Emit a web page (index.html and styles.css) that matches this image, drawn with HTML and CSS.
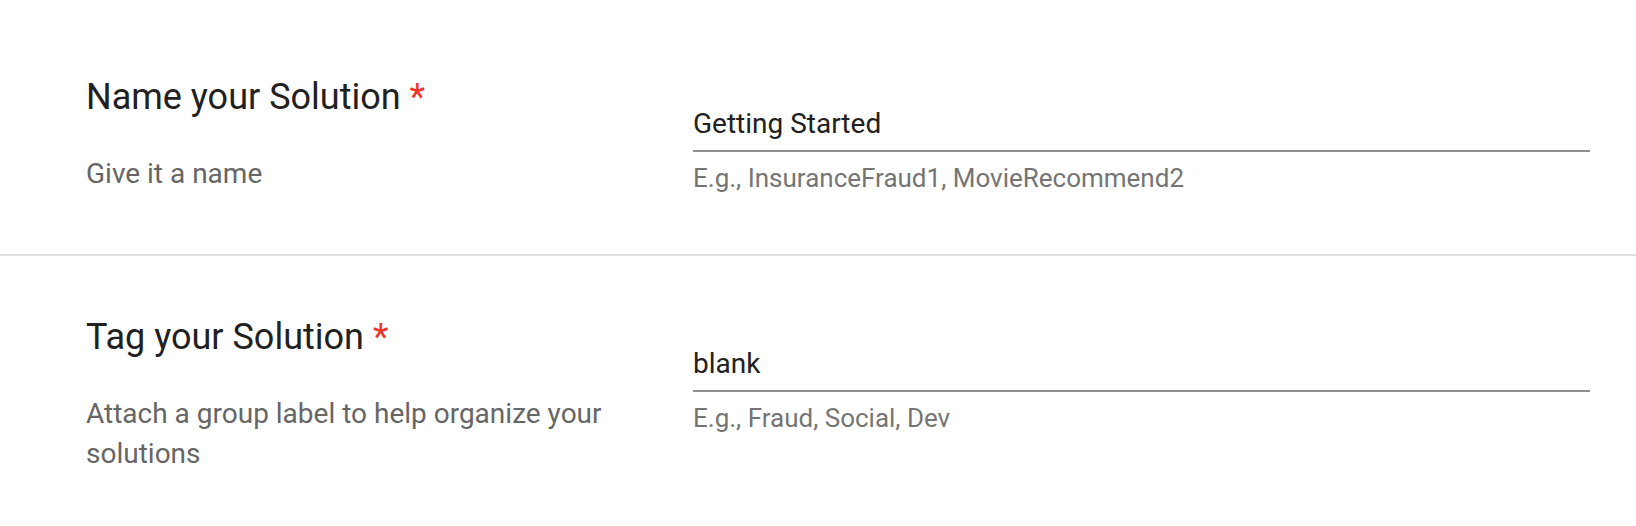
FILE: index.html
```html
<!DOCTYPE html>
<html lang="en">
<head>
<meta charset="utf-8">
<title>Solution settings</title>
<link rel="stylesheet" href="styles.css">
</head>
<body>
<main class="page">
  <section class="row">
    <div class="info">
      <h2 class="title">Name your Solution <span class="req">*</span></h2>
      <p class="desc">Give it a name</p>
    </div>
    <div class="field">
      <input class="input" type="text" value="Getting Started">
      <div class="helper">E.g., InsuranceFraud1, MovieRecommend2</div>
    </div>
  </section>
  <section class="row">
    <div class="info">
      <h2 class="title">Tag your Solution <span class="req">*</span></h2>
      <p class="desc">Attach a group label to help organize your solutions</p>
    </div>
    <div class="field">
      <input class="input" type="text" value="blank">
      <div class="helper">E.g., Fraud, Social, Dev</div>
    </div>
  </section>
</main>
</body>
</html>
```
FILE: styles.css
```css
html, body {
  margin: 0;
  padding: 0;
  background: #ffffff;
}
body {
  font-family: Roboto, "Liberation Sans", Arial, sans-serif;
  color: #212121;
}
.page {
  padding-top: 16px;
}
.row {
  display: flex;
  gap: 62px;
  padding: 59px 46px 60px 86px;
}
.row + .row {
  border-top: 2px solid #e0e0e0;
}
.info {
  width: 545px;
  flex: none;
  display: flex;
  flex-direction: column;
  gap: 35px;
}
.title {
  margin: 0;
  font-size: 36px;
  line-height: 44px;
  font-weight: 400;
  color: #212121;
}
.req {
  color: #f0352a;
}
.desc {
  margin: 0;
  font-size: 28px;
  line-height: 40px;
  color: #666666;
}
.field {
  flex: 1;
  padding-top: 30px;
  display: flex;
  flex-direction: column;
}
.input {
  display: block;
  width: 100%;
  box-sizing: border-box;
  margin: 0;
  padding: 0 0 9px 0;
  border: none;
  border-bottom: 2px solid #8f8f8f;
  outline: none;
  background: transparent;
  font-family: inherit;
  font-size: 28px;
  line-height: 36px;
  height: 47px;
  color: #212121;
}
.helper {
  margin-top: 10px;
  font-size: 26px;
  line-height: 32px;
  color: #757575;
}
```
